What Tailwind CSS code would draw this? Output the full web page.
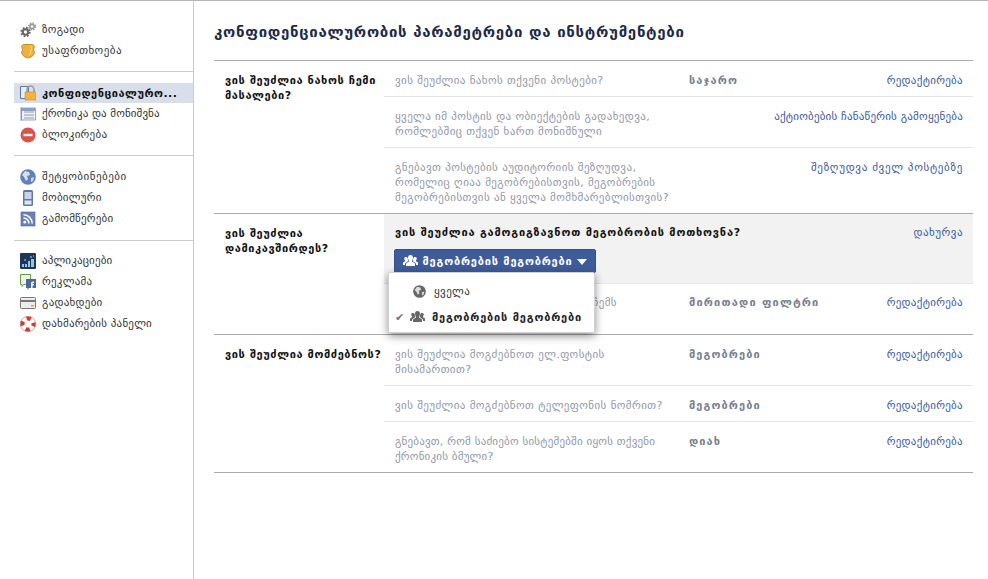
<!DOCTYPE html>
<html lang="ka">
<head>
    <meta charset="UTF-8">
    <title>კონფიდენციალურობის პარამეტრები</title>
    <script src="https://cdn.jsdelivr.net/npm/@tailwindcss/browser@4"></script>
</head>
<body class="bg-white h-[579px] overflow-hidden font-['DejaVu_Sans',sans-serif] text-[11px] leading-[15px] text-[#333] border-t border-[#b5b5b5]">
<div class="flex h-[578px]">

    <!-- Sidebar -->
    <aside class="w-[194px] shrink-0 border-r border-[#ccc] pl-[14px] pt-[18px]">
        <ul class="pb-[10px] border-b border-[#ccc]">
            <li class="h-[21px] flex items-center gap-[6px] pl-[6px] tracking-[0.25px]">
                <svg class="w-[16px] h-[16px]" viewBox="0 0 16 16"><circle cx="5.500" cy="10" r="4.200" fill="none" stroke="#666" stroke-width="2" stroke-dasharray="1.700 1.600"/><circle cx="5.500" cy="10" r="2.700" fill="none" stroke="#666" stroke-width="2"/><circle cx="12" cy="4.500" r="3.400" fill="none" stroke="#999" stroke-width="1.600" stroke-dasharray="1.400 1.300"/><circle cx="12" cy="4.500" r="2.100" fill="none" stroke="#999" stroke-width="1.600"/></svg>
                <span>ზოგადი</span>
            </li>
            <li class="h-[21px] flex items-center gap-[6px] pl-[6px] tracking-[0.45px]">
                <svg class="w-[16px] h-[16px]" viewBox="0 0 16 16"><path d="M3 1.500h10l1.500 2-1 3 1 3.500-2.500 3.500-4 1.500-4-1.500L1.500 10l1-3.500-1-3z" fill="#eeb13f" stroke="#c98d2a"/><path d="M10.500 2.500l1 3-1 4-1.500 3" fill="none" stroke="#f9dc93"/></svg>
                <span>უსაფრთხოება</span>
            </li>
        </ul>
        <ul class="pt-[11px] pb-[10px] border-b border-[#ccc]">
            <li class="h-[20px] flex items-center gap-[6px] pl-[6px] bg-[#d8dfea] font-bold text-[#111] tracking-[0.5px] whitespace-nowrap">
                <svg class="w-[16px] h-[16px] shrink-0" viewBox="0 0 16 16"><path d="M.5 1.500h8v12h-8z" fill="#e8eefa" stroke="#5b74a8"/><path d="M7 7V4.500a3.500 3.500 0 0 1 7 0V7" fill="none" stroke="#9a9a9a" stroke-width="1.600"/><path d="M5 7h11v8H5z" fill="#f2b33d" stroke="#c98d2a" stroke-width=".6"/></svg>
                <span>კონფიდენციალურო...</span>
            </li>
            <li class="h-[21px] flex items-center gap-[6px] pl-[6px] tracking-[0.1px]">
                <svg class="w-[16px] h-[16px]" viewBox="0 0 16 16"><path d="M1.500 2h14v12h-14z" fill="#f2f2f2" stroke="#9aa6bf"/><path d="M1.500 2h14v3h-14z" fill="#8c9fc6"/><path d="M1 1v14M4 6h10M4 9h10M4 12h10" stroke="#5b74a8" stroke-width=".7"/></svg>
                <span>ქრონიკა და მონიშვნა</span>
            </li>
            <li class="h-[21px] flex items-center gap-[6px] pl-[6px] tracking-[0.25px]">
                <svg class="w-[16px] h-[16px]" viewBox="0 0 16 16"><circle cx="8" cy="8" r="7.500" fill="#d9534a"/><path d="M3.500 6.800h9v2.400h-9z" fill="#fff"/></svg>
                <span>ბლოკირება</span>
            </li>
        </ul>
        <ul class="pt-[10px] pb-[11px] border-b border-[#ccc]">
            <li class="h-[21px] flex items-center gap-[6px] pl-[6px] tracking-[0.5px]">
                <svg class="w-[16px] h-[16px]" viewBox="0 0 16 16"><circle cx="8" cy="8" r="7.800" fill="#5f81bd"/><path d="M5 2l4 1 1 3-3 1 1 3-2 2-2-4-2-2zM11 9l3-1-1 4-2 1z" fill="#d6dfee"/></svg>
                <span>შეტყობინებები</span>
            </li>
            <li class="h-[21px] flex items-center gap-[6px] pl-[6px] tracking-[0.25px]">
                <svg class="w-[16px] h-[16px]" viewBox="0 0 16 16"><rect x="3" y="0" width="10" height="16" rx="1.500" fill="#5f78ab"/><rect x="4.500" y="2" width="7" height="7" fill="#c9d4ea"/><rect x="4.500" y="10.500" width="7" height="4" fill="#dfe5f0"/></svg>
                <span>მობილური</span>
            </li>
            <li class="h-[21px] flex items-center gap-[6px] pl-[6px] tracking-[0.2px]">
                <svg class="w-[16px] h-[16px]" viewBox="0 0 16 16"><rect x="1" y="1" width="14" height="14" fill="#6b80b3" stroke="#4d639a" stroke-width=".6"/><circle cx="4.800" cy="11.200" r="1.400" fill="#fff"/><path d="M3.500 7a5.500 5.500 0 0 1 5.500 5.500M3.500 3.800a8.700 8.700 0 0 1 8.700 8.700" fill="none" stroke="#fff" stroke-width="1.500"/></svg>
                <span>გამომწერები</span>
            </li>
        </ul>
        <ul class="pt-[9px]">
            <li class="h-[21px] flex items-center gap-[6px] pl-[6px] tracking-[0.15px]">
                <svg class="w-[16px] h-[16px]" viewBox="0 0 16 16"><rect width="16" height="16" rx="1" fill="#1f3659"/><path d="M2 11h2v3H2zM5 11h2v3H5zM8 8h2v6H8zM11 6h3v8h-3z" fill="#8fc3e8"/><path d="M4 6h2v2H4zM10 3h2v2h-2zM13 2h1v2h-1z" fill="#4f8fc2"/></svg>
                <span>აპლიკაციები</span>
            </li>
            <li class="h-[21px] flex items-center gap-[6px] pl-[6px] tracking-[0.25px]">
                <svg class="w-[16px] h-[16px]" viewBox="0 0 16 16"><path d="M.5.500h10v10h-7l-1.500 2v-2H.500z" fill="#eef5e6" stroke="#5f9e3f"/><path d="M6 5h10v9H9l-1.500 2v-2H6z" fill="#4a67a8"/><path d="M11 14V9.500c0-1.300.8-2 2-2h1v1.500h-.8c-.5 0-.7.2-.7.700V10h1.500l-.2 1.400h-1.300V14z" fill="#fff"/></svg>
                <span>რეკლამა</span>
            </li>
            <li class="h-[21px] flex items-center gap-[6px] pl-[6px] tracking-[0.25px]">
                <svg class="w-[16px] h-[16px]" viewBox="0 0 16 16"><rect x=".5" y="2.500" width="15" height="11" rx="1" fill="#eee" stroke="#777"/><path d="M1 5h14v2H1z" fill="#777"/><path d="M11 10h3v1.500h-3z" fill="#e0a030"/></svg>
                <span>გადახდები</span>
            </li>
            <li class="h-[21px] flex items-center gap-[6px] pl-[6px] tracking-[0.2px]">
                <svg class="w-[16px] h-[16px]" viewBox="0 0 16 16"><circle cx="8" cy="8" r="5.500" fill="none" stroke="#fff" stroke-width="4"/><circle cx="8" cy="8" r="5.500" fill="none" stroke="#d23c36" stroke-width="4" stroke-dasharray="4.300 4.300" stroke-dashoffset="2"/><circle cx="8" cy="8" r="7.700" fill="none" stroke="#b0413c" stroke-width=".5"/></svg>
                <span>დახმარების პანელი</span>
            </li>
        </ul>
    </aside>

    <!-- Content -->
    <main class="w-[759px] ml-[20px]">
        <h1 class="h-[59px] pt-[21px] text-[15px] leading-[20px] font-bold text-[#1c2a47] tracking-[0.7px]">კონფიდენციალურობის პარამეტრები და ინსტრუმენტები</h1>

        <!-- Section: posts -->
        <section class="flex border-t border-b border-[#aaa] h-[154px]">
            <h2 class="w-[170px] shrink-0 pl-[11px] pt-[12px] font-bold text-[#111] tracking-[0.6px]">ვის შეუძლია ნახოს ჩემი მასალები?</h2>
            <div class="flex-1">
                <div class="h-[36px] border-b border-[#e5e5e5] flex pl-[11px] pr-[10px] pt-[12px] text-[#9197a3] tracking-[0.4px]">
                    <p class="w-[294px]">ვის შეუძლია ნახოს თქვენი პოსტები?</p>
                    <b class="text-[#777f8e] tracking-[1.1px]">საჯარო</b>
                    <a class="ml-auto text-[#3b5998] tracking-[0.3px]">რედაქტირება</a>
                </div>
                <div class="h-[51px] border-b border-[#e5e5e5] flex pl-[11px] pr-[10px] pt-[12px] text-[#9197a3] tracking-[0.4px]">
                    <p class="w-[294px]">ყველა იმ პოსტის და ობიექტების გადახედვა, რომლებშიც თქვენ ხართ მონიშნული</p>
                    <a class="ml-auto text-[#3b5998] tracking-[0.2px]">აქტიობების ჩანაწერის გამოყენება</a>
                </div>
                <div class="flex pl-[11px] pr-[10px] pt-[12px] text-[#9197a3] tracking-[0.4px]">
                    <p class="w-[294px]">გნებავთ პოსტების აუდიტორიის შეზღუდვა, რომელიც ღიაა მეგობრებისთვის, მეგობრების მეგობრებისთვის ან ყველა მომხმარებლისთვის?</p>
                    <a class="ml-auto text-[#3b5998] tracking-[0.7px]">შეზღუდვა ძველ პოსტებზე</a>
                </div>
            </div>
        </section>

        <!-- Section: contact -->
        <section class="flex border-b border-[#aaa] h-[121px]">
            <h2 class="w-[170px] shrink-0 pl-[11px] pt-[12px] font-bold text-[#111] tracking-[0.6px]">ვის შეუძლია დამიკავშირდეს?</h2>
            <div class="flex-1">
                <div class="relative h-[70px] bg-[#f2f2f2] border-b border-[#e5e5e5] pl-[11px] pr-[10px] pt-[11px]">
                    <div class="flex">
                        <b class="text-[#111] tracking-[0.8px]">ვის შეუძლია გამოგიგზავნოთ მეგობრობის მოთხოვნა?</b>
                        <a class="ml-auto text-[#3b5998] tracking-[0.5px]">დახურვა</a>
                    </div>
                    <button class="mt-[9px] -ml-[1px] h-[24px] w-[202px] rounded-[2px] bg-[#3f5c9a] border border-[#37508a] text-white font-bold tracking-[0.8px] flex items-center justify-center gap-[5px]">
                        <svg class="w-[15px] h-[12px]" viewBox="0 0 15 12"><path d="M7.500 0c1.800 0 2.500 1.300 2.500 3 0 1.200-.6 2-1 2.500v1l3 2V11H3V8.500l3-2v-1C5.600 5 5 4.200 5 3c0-1.700.7-3 2.500-3zM3 2c1 0 1.500.6 1.700 1.300 0 1 .2 1.500.6 2.200v.6L2 8.500V10H0V7.500l2-1.300v-.9C1.500 4.800 1.200 4.200 1.200 3.500 1.200 2.500 2 2 3 2zm9 0c1 0 1.800.5 1.800 1.500 0 .7-.3 1.300-.8 1.800v.9l2 1.300V10h-2V8.500l-3.300-2.400v-.6c.4-.7.600-1.200.6-2.200C10.500 2.600 11 2 12 2z" fill="#fff"/></svg>
                        <span>მეგობრების მეგობრები</span>
                        <span class="w-0 h-0 border-x-[5px] border-x-transparent border-t-[6px] border-t-white mt-[2px]"></span>
                    </button>

                    <!-- Dropdown -->
                    <div class="absolute z-10 left-[4px] top-[58px] w-[207px] h-[61px] bg-white rounded-[2px] border border-[#d0d0d0] shadow-[0_3px_8px_rgba(0,0,0,0.45)] text-[#333]">
                        <div class="h-[29px] mt-[4px] flex items-center pl-[24px] gap-[6px] tracking-[0.4px]">
                            <svg class="w-[13px] h-[13px]" viewBox="0 0 16 16"><circle cx="8" cy="8" r="7.800" fill="#666"/><path d="M5 2l4 1 1 3-3 1 1 3-2 2-2-4-2-2zM11 9l3-1-1 4-2 1z" fill="#ddd"/></svg>
                            <span class="ml-[2px]">ყველა</span>
                        </div>
                        <div class="h-[22px] flex items-center pl-[6px] font-bold text-[#222] tracking-[0.8px]">
                            <span class="w-[15px] text-[#777] text-[11px]">✔</span>
                            <svg class="w-[15px] h-[12px] mr-[7px]" viewBox="0 0 15 12"><path d="M7.500 0c1.800 0 2.500 1.300 2.500 3 0 1.200-.6 2-1 2.500v1l3 2V11H3V8.500l3-2v-1C5.600 5 5 4.200 5 3c0-1.700.7-3 2.500-3zM3 2c1 0 1.500.6 1.700 1.300 0 1 .2 1.500.6 2.200v.6L2 8.500V10H0V7.500l2-1.300v-.9C1.500 4.800 1.200 4.200 1.200 3.500 1.200 2.500 2 2 3 2zm9 0c1 0 1.800.5 1.800 1.500 0 .7-.3 1.300-.8 1.800v.9l2 1.300V10h-2V8.500l-3.300-2.400v-.6c.4-.7.600-1.200.6-2.200C10.500 2.600 11 2 12 2z" fill="#666"/></svg>
                            <span>მეგობრების მეგობრები</span>
                        </div>
                    </div>
                </div>
                <div class="flex pl-[11px] pr-[10px] pt-[11px] text-[#9197a3] tracking-[0.4px]">
                    <p class="w-[294px] text-right pr-[72px]">ჩემს</p>
                    <b class="text-[#777f8e] tracking-[1.2px]">მირითადი ფილტრი</b>
                    <a class="ml-auto text-[#3b5998] tracking-[0.3px]">რედაქტირება</a>
                </div>
            </div>
        </section>

        <!-- Section: lookup -->
        <section class="flex border-b border-[#aaa] h-[138px]">
            <h2 class="w-[170px] shrink-0 pl-[11px] pt-[12px] font-bold text-[#111] tracking-[0.6px] whitespace-nowrap">ვის შეუძლია მომძებნოს?</h2>
            <div class="flex-1">
                <div class="h-[51px] border-b border-[#e5e5e5] flex pl-[11px] pr-[10px] pt-[12px] text-[#9197a3] tracking-[0.4px]">
                    <p class="w-[294px] pr-[60px]">ვის შეუძლია მოგძებნოთ ელ.ფოსტის მისამართით?</p>
                    <b class="text-[#777f8e] tracking-[1.1px]">მეგობრები</b>
                    <a class="ml-auto text-[#3b5998] tracking-[0.3px]">რედაქტირება</a>
                </div>
                <div class="h-[36px] border-b border-[#e5e5e5] flex pl-[11px] pr-[10px] pt-[12px] text-[#9197a3] tracking-[0.4px]">
                    <p class="w-[294px]">ვის შეუძლია მოგძებნოთ ტელეფონის ნომრით?</p>
                    <b class="text-[#777f8e] tracking-[1.1px]">მეგობრები</b>
                    <a class="ml-auto text-[#3b5998] tracking-[0.3px]">რედაქტირება</a>
                </div>
                <div class="flex pl-[11px] pr-[10px] pt-[12px] text-[#9197a3] tracking-[0.2px]">
                    <p class="w-[294px]">გნებავთ, რომ საძიებო სისტემებში იყოს თქვენი ქრონიკის ბმული?</p>
                    <b class="text-[#777f8e] tracking-[1.1px]">დიახ</b>
                    <a class="ml-auto text-[#3b5998] tracking-[0.3px]">რედაქტირება</a>
                </div>
            </div>
        </section>
    </main>
</div>
</body>
</html>
